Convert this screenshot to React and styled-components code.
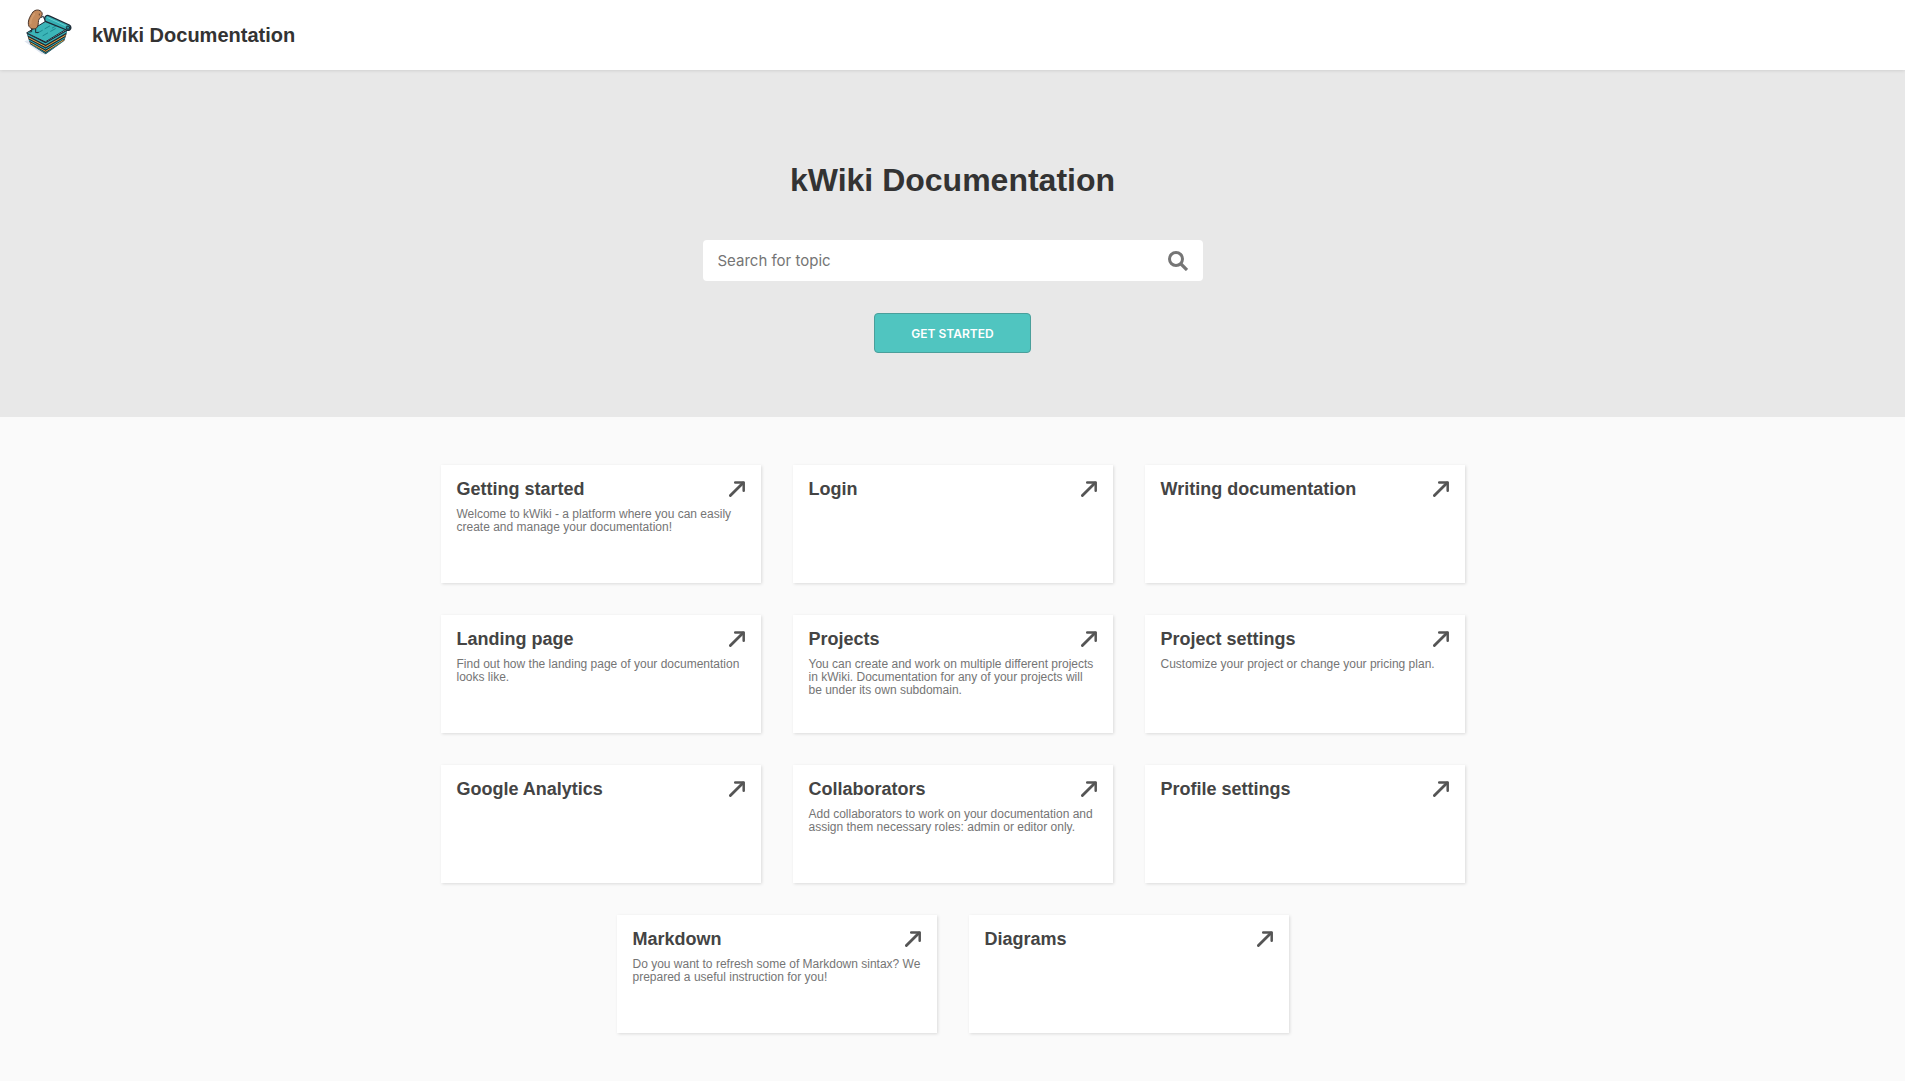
import React from 'react';
import styled, { createGlobalStyle } from 'styled-components';

const GlobalStyle = createGlobalStyle`
  *, *::before, *::after { box-sizing: border-box; }
  body {
    margin: 0;
    background: #fafafa;
    color: #333;
    font-family: "Liberation Sans", Arial, sans-serif;
  }
`;

const Header = styled.header`
  position: relative;
  display: flex;
  align-items: center;
  height: 70px;
  padding: 0 24px;
  background: #fff;
  box-shadow: 0 0 4px rgba(0, 0, 0, 0.16);
`;

const Brand = styled.a`
  display: flex;
  align-items: center;
  gap: 20px;
  color: #333;
  font-size: 20px;
  font-weight: 700;
  text-decoration: none;
`;

const LogoArt = styled.svg`
  display: block;
  width: 48px;
  height: 52px;
`;

const Hero = styled.section`
  display: flex;
  flex-direction: column;
  align-items: center;
  padding: 92px 24px 64px;
  background: #e8e8e8;
`;

const HeroTitle = styled.h1`
  margin: 0;
  font-size: 32px;
  line-height: 36px;
`;

const SearchForm = styled.form`
  display: flex;
  align-items: center;
  width: 100%;
  max-width: 500px;
  height: 41px;
  margin: 42px 0 32px;
  padding: 0 15px;
  border-radius: 4px;
  background: #fff;
`;

const SearchInput = styled.input`
  flex: 1;
  min-width: 0;
  padding: 0;
  border: 0;
  outline: 0;
  background: transparent;
  color: #333;
  font: 15px Inter, sans-serif;

  &::placeholder { color: #757575; opacity: 1; }
`;

const SearchButton = styled.button`
  display: flex;
  padding: 0;
  border: 0;
  background: none;
  color: #757575;
  cursor: pointer;
`;

const StartButton = styled.button`
  height: 40px;
  min-width: 157px;
  padding: 0 24px;
  border: 1px solid #4a9f9b;
  border-radius: 4px;
  background: #50c5c0;
  color: #fff;
  font: 600 12px Inter, sans-serif;
  text-transform: uppercase;
  cursor: pointer;
`;

const Topics = styled.main`
  display: flex;
  flex-wrap: wrap;
  justify-content: center;
  gap: 32px;
  max-width: 1088px;
  margin: 0 auto;
  padding: 48px 32px;
`;

const Card = styled.a`
  width: 320px;
  min-height: 118px;
  padding: 16px;
  background: #fff;
  box-shadow: 1px 1px 3px rgba(0, 0, 0, 0.13);
  color: #757575;
  text-decoration: none;
`;

const CardHead = styled.div`
  display: flex;
  align-items: center;
  justify-content: space-between;
  color: #444;
`;

const CardTitle = styled.h2`
  margin: 0;
  font-size: 18px;
  line-height: 16px;
`;

const CardText = styled.p`
  margin: 11px 0 0;
  font-size: 12px;
  line-height: 13px;
`;

const topics = [
  ['Getting started', 'Welcome to kWiki - a platform where you can easily create and manage your documentation!'],
  ['Login'],
  ['Writing documentation'],
  ['Landing page', 'Find out how the landing page of your documentation looks like.'],
  ['Projects', 'You can create and work on multiple different projects in kWiki. Documentation for any of your projects will be under its own subdomain.'],
  ['Project settings', 'Customize your project or change your pricing plan.'],
  ['Google Analytics'],
  ['Collaborators', 'Add collaborators to work on your documentation and assign them necessary roles: admin or editor only.'],
  ['Profile settings'],
  ['Markdown', 'Do you want to refresh some of Markdown sintax? We prepared a useful instruction for you!'],
  ['Diagrams'],
];

function Logo() {
  return (
    <LogoArt viewBox="27 27 144 156" fill="none" strokeLinejoin="round" strokeLinecap="round" aria-hidden="true">
      <path d="M28 124 L40 120 L92 164 L80 162Z" fill="#dfe6f0" />
      <path d="M35 98 L92 126 L157 88 L154 104 L148 122 L92 163 L46 133 L40 116Z" fill="#1c2a36" />
      <path d="M39 105 L92 132 L154 96" stroke="#3ab5b8" strokeWidth="4" />
      <path d="M42 114 L92 140 L151 106" stroke="#f0a63c" strokeWidth="3" />
      <path d="M43 121 L92 147 L149 114" stroke="#35aeb2" strokeWidth="3" />
      <path d="M47 129 L92 154 L145 121" stroke="#f0a63c" strokeWidth="3" />
      <path d="M51 134 L92 160 L141 126" stroke="#35aeb2" strokeWidth="2" />
      <path d="M36 98 L92 64 L156 86 L92 125Z" fill="#3bb5b8" stroke="#1c2a36" strokeWidth="3" />
      <path d="M68 99 L82 91 M90 86 L104 78 M84 107 L98 99 M107 94 L121 86 M112 84 L124 77" stroke="#1b8890" strokeWidth="3" />
      <path d="M91 50 Q95 44 101 47 L163 75 Q169 79 167 86 Q163 94 155 90 L91 64 Q87 56 91 50Z" fill="#35aeb2" stroke="#1c2a36" strokeWidth="4" />
      <path d="M98 53 L151 77" stroke="#66ced0" strokeWidth="3" />
      <circle cx="159" cy="83" r="5" fill="#2595a0" stroke="#1c2a36" strokeWidth="3" />
      <path d="M50 84 L50 95 L44 96 M62 84 L62 98 L70 97" stroke="#1c2a36" strokeWidth="3" />
      <path d="M77 53 L85 49 L88 57" stroke="#1c2a36" strokeWidth="3" />
      <path d="M54 36 C60 28 75 27 81 38 C84 47 77 51 73 56 C68 62 72 73 67 81 C61 90 47 88 42 79 C36 66 44 49 54 36Z" fill="#c48a5c" stroke="#4a3429" strokeWidth="3" />
      <path d="M58 42 C51 51 46 60 47 70" stroke="#d09a6c" strokeWidth="5" />
      <path d="M73 42 V45" stroke="#33241e" strokeWidth="2" />
    </LogoArt>
  );
}

const Arrow = () => (
  <svg width="16" height="16" viewBox="0 0 16 16" fill="none" stroke="#555" strokeLinecap="round" strokeLinejoin="round" aria-hidden="true">
    <path d="M1.4 14.6 L14 2" strokeWidth="2.8" />
    <path d="M6.2 1.4 H14.7 V9.8" strokeWidth="2.5" />
  </svg>
);

const SearchIcon = () => (
  <svg width="20" height="20" viewBox="0 0 20 20" fill="none" stroke="currentColor" aria-hidden="true">
    <circle cx="8" cy="8" r="6.5" strokeWidth="3" />
    <path d="M12.5 12.5 L19 19" strokeWidth="3.2" />
  </svg>
);

export default function App() {
  return (
    <>
      <GlobalStyle />
      <Header>
        <Brand href="#home"><Logo />kWiki Documentation</Brand>
      </Header>
      <Hero>
        <HeroTitle>kWiki Documentation</HeroTitle>
        <SearchForm role="search">
          <SearchInput type="text" aria-label="Search for topic" placeholder="Search for topic" />
          <SearchButton type="submit" aria-label="Search"><SearchIcon /></SearchButton>
        </SearchForm>
        <StartButton type="button">Get started</StartButton>
      </Hero>
      <Topics>
        {topics.map(([title, text]) => (
          <Card key={title} href="#topic">
            <CardHead><CardTitle>{title}</CardTitle><Arrow /></CardHead>
            {text && <CardText>{text}</CardText>}
          </Card>
        ))}
      </Topics>
    </>
  );
}
